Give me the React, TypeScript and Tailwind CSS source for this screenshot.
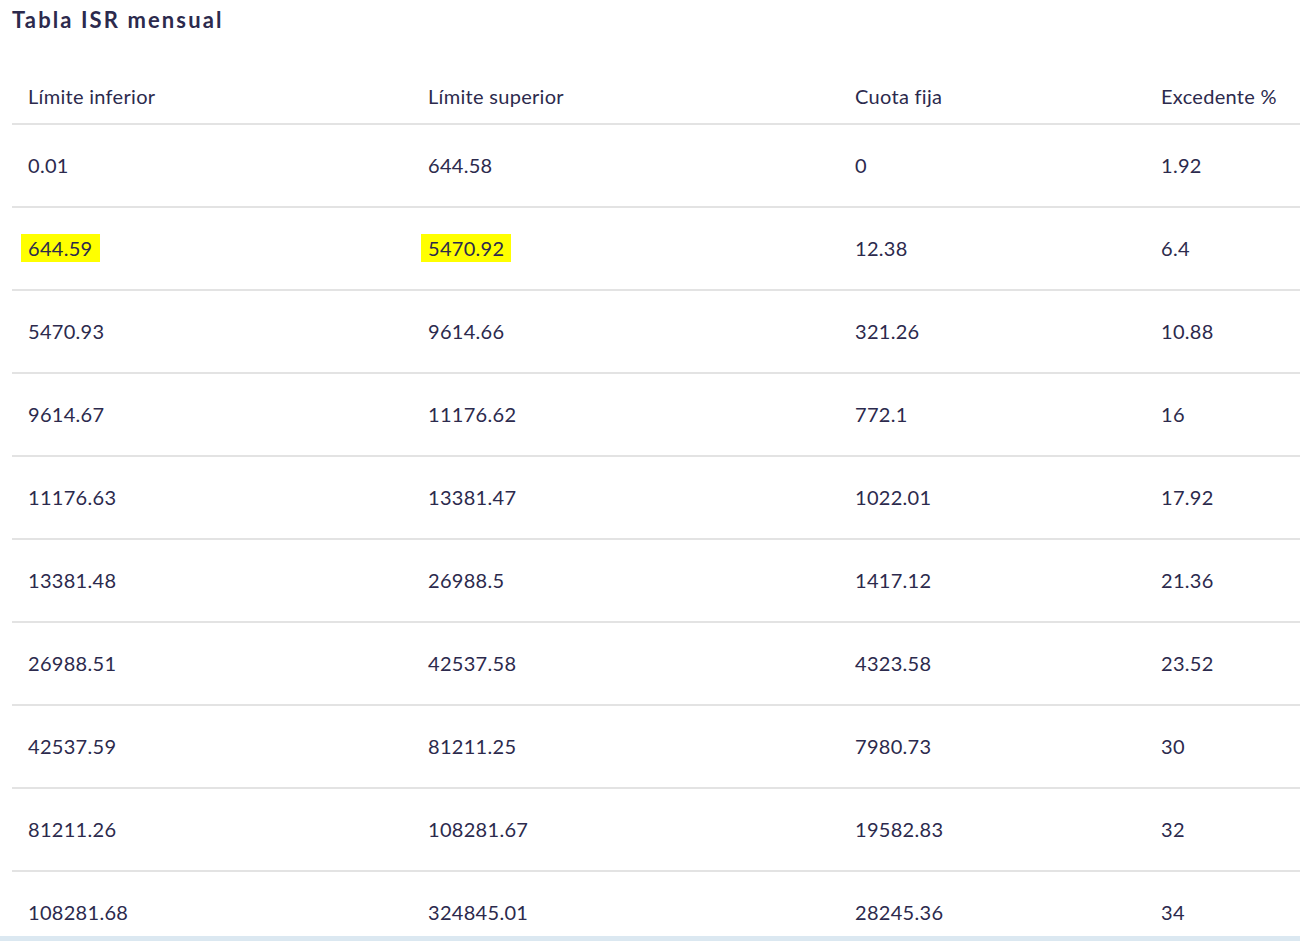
const rows: [string, string, string, string][] = [
  ["0.01", "644.58", "0", "1.92"],
  ["644.59", "5470.92", "12.38", "6.4"],
  ["5470.93", "9614.66", "321.26", "10.88"],
  ["9614.67", "11176.62", "772.1", "16"],
  ["11176.63", "13381.47", "1022.01", "17.92"],
  ["13381.48", "26988.5", "1417.12", "21.36"],
  ["26988.51", "42537.58", "4323.58", "23.52"],
  ["42537.59", "81211.25", "7980.73", "30"],
  ["81211.26", "108281.67", "19582.83", "32"],
  ["108281.68", "324845.01", "28245.36", "34"],
];

function Cell({ value, mark }: { value: string; mark?: boolean }) {
  if (!mark) return <>{value}</>;
  return <span className="bg-[#ffff00] -mx-[7px] px-[7px] py-[2px]">{value}</span>;
}

export default function App() {
  return (
    <div
      className="w-[1300px] h-[941px] bg-white flex flex-col overflow-hidden text-[#2c2a4d]"
      style={{ fontFamily: "Lato, 'Open Sans', sans-serif" }}
    >
      <h2 className="px-3 pt-[6px] text-[22px] font-bold leading-[28px] tracking-[2.1px]">Tabla ISR mensual</h2>
      <div className="flex-1 overflow-hidden pl-3">
        <table className="w-[1288px] border-collapse text-[20px] tracking-[0.3px] table-fixed">
          <thead>
            <tr className="border-b-2 border-[#e3e3e3]">
              <th className="w-[400px] text-left font-normal pl-4 pt-[50px] pb-[15px] leading-[24px]">Límite inferior</th>
              <th className="w-[427px] text-left font-normal pl-4 pt-[50px] pb-[15px] leading-[24px]">Límite superior</th>
              <th className="w-[306px] text-left font-normal pl-4 pt-[50px] pb-[15px] leading-[24px]">Cuota fija</th>
              <th className="text-left font-normal pl-4 pt-[50px] pb-[15px] leading-[24px]">Excedente %</th>
            </tr>
          </thead>
          <tbody>
            {rows.map((r, i) => (
              <tr key={i} className="border-b-2 border-[#e3e3e3] h-[83px]">
                <td className="pl-4 pb-[2px] leading-[24px]"><Cell value={r[0]} mark={i === 1} /></td>
                <td className="pl-4 pb-[2px] leading-[24px]"><Cell value={r[1]} mark={i === 1} /></td>
                <td className="pl-4 pb-[2px] leading-[24px]">{r[2]}</td>
                <td className="pl-4 pb-[2px] leading-[24px]">{r[3]}</td>
              </tr>
            ))}
          </tbody>
        </table>
      </div>
      <div className="h-[5px] bg-[#dbe8f1]" />
    </div>
  );
}
